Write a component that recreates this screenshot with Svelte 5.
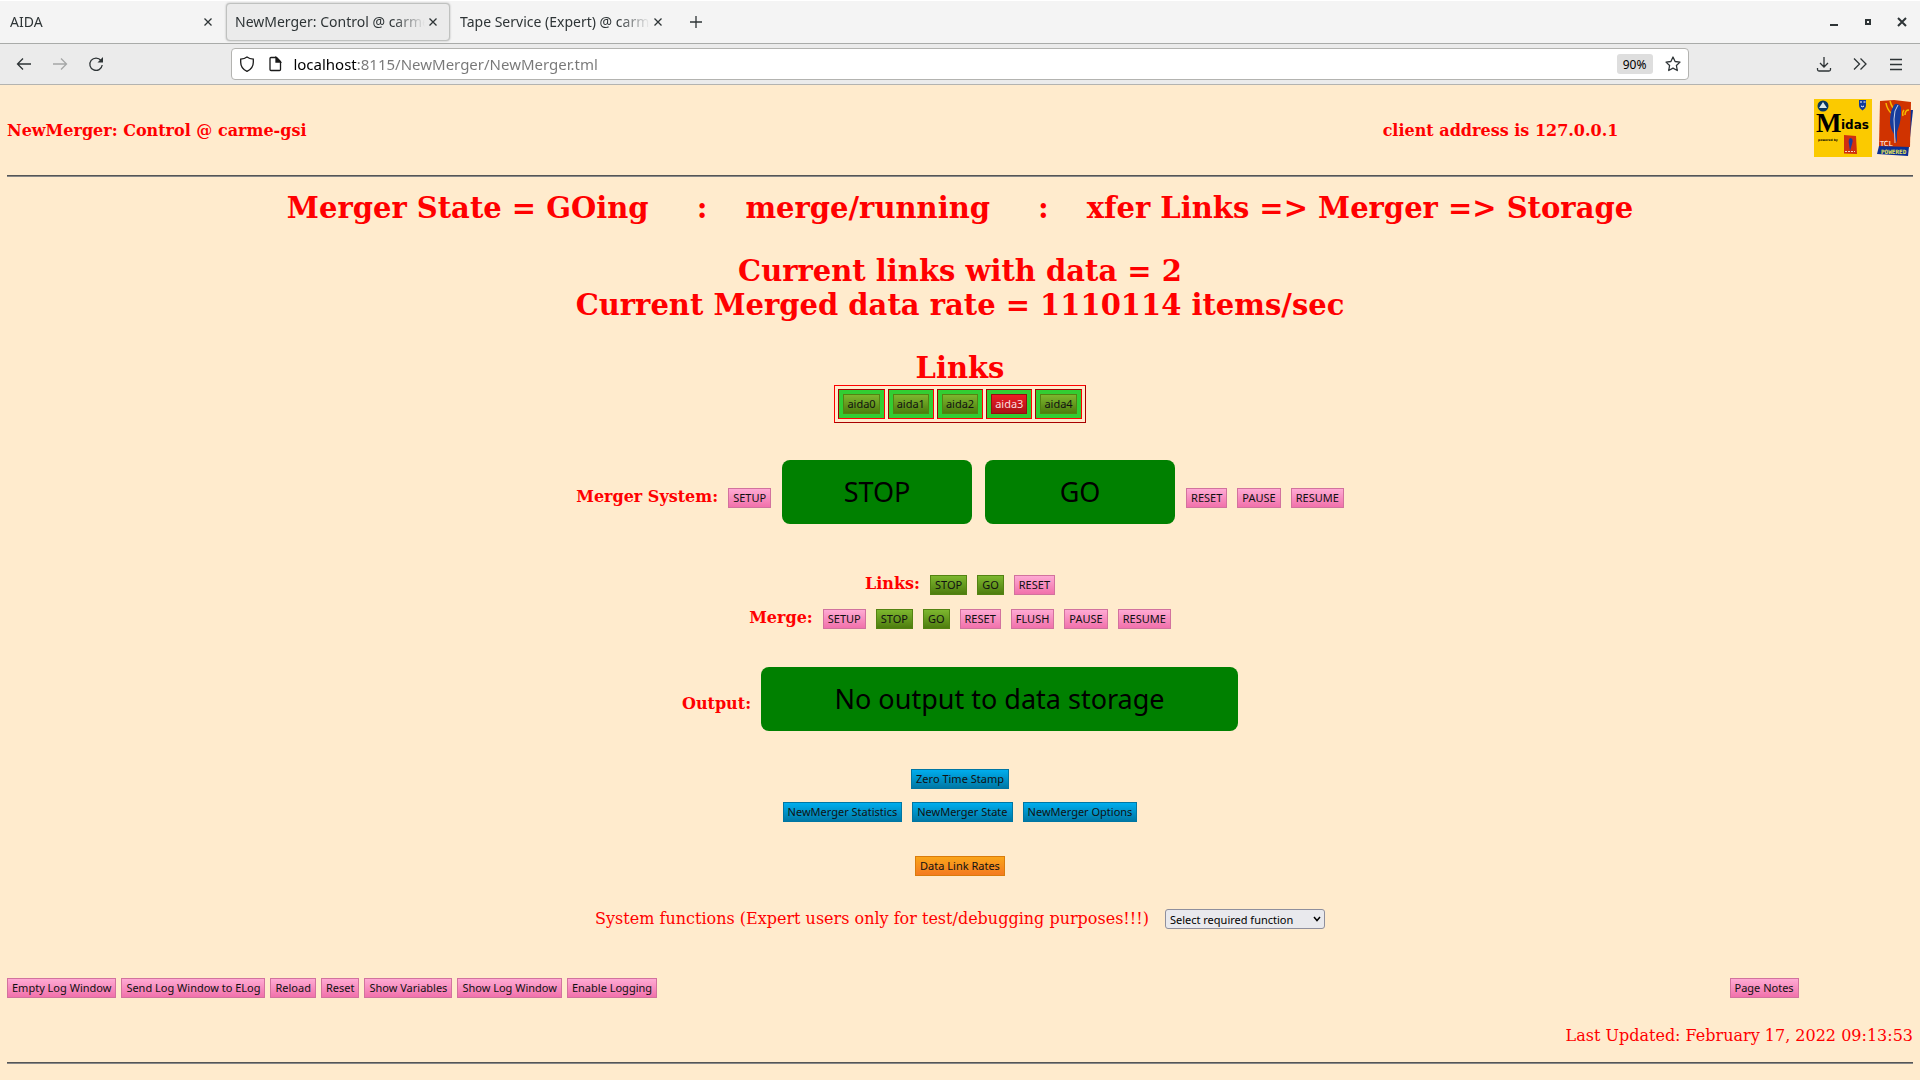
<script>
const tabs = [
    { title: "AIDA" },
    { title: "NewMerger: Control @ carme-gsi", active: true },
    { title: "Tape Service (Expert) @ carme-gsi" },
];

const links = [
    { name: "aida0", colour: "green" },
    { name: "aida1", colour: "green" },
    { name: "aida2", colour: "green" },
    { name: "aida3", colour: "red" },
    { name: "aida4", colour: "green" },
];

const linkActions = [
    { name: "STOP", colour: "green" },
    { name: "GO", colour: "green" },
    { name: "RESET", colour: "pink" },
];

const mergeActions = [
    { name: "SETUP", colour: "pink" },
    { name: "STOP", colour: "green" },
    { name: "GO", colour: "green" },
    { name: "RESET", colour: "pink" },
    { name: "FLUSH", colour: "pink" },
    { name: "PAUSE", colour: "pink" },
    { name: "RESUME", colour: "pink" },
];

const logActions = [
    "Empty Log Window",
    "Send Log Window to ELog",
    "Reload",
    "Reset",
    "Show Variables",
    "Show Log Window",
    "Enable Logging",
];

let url = "localhost:8115/NewMerger/NewMerger.tml";
</script>

<div class="browser">
    <div class="tabbar">
        {#each tabs as tab}
            <div class="tab" class:active={tab.active}>
                <button class="title">{tab.title}</button>
                <button class="icon close" aria-label="Close tab">
                    <svg width="8" height="8" viewBox="0 0 8 8"><path d="M.5.5l7 7M7.5.5l-7 7" /></svg>
                </button>
            </div>
        {/each}
        <button class="icon plus" aria-label="New tab">
            <svg width="12" height="12" viewBox="0 0 12 12"><path d="M6 0v12M0 6h12" /></svg>
        </button>
        <div class="window">
            <button class="icon" aria-label="Minimise">
                <svg width="10" height="10" viewBox="0 0 10 10"><path d="M1 8h8" stroke-width="2" /></svg>
            </button>
            <button class="icon" aria-label="Restore">
                <svg width="10" height="10" viewBox="0 0 10 10"><path d="M3 3h4v4h-4z" stroke-width="2" /></svg>
            </button>
            <button class="icon" aria-label="Close window">
                <svg width="10" height="10" viewBox="0 0 10 10"><path d="M1 1l8 8M9 1l-8 8" stroke-width="2" /></svg>
            </button>
        </div>
    </div>

    <div class="toolbar">
        <div class="nav">
            <button class="icon" aria-label="Back">
                <svg width="16" height="16" viewBox="0 0 16 16"><path d="M15 8H1.500M7 2.500L1.500 8l5.500 5.500" /></svg>
            </button>
            <button class="icon faded" aria-label="Forward">
                <svg width="16" height="16" viewBox="0 0 16 16"><path d="M1 8h13.500M9 2.500L14.500 8 9 13.500" /></svg>
            </button>
            <button class="icon" aria-label="Reload page">
                <svg width="16" height="16" viewBox="0 0 16 16">
                    <path d="M13 4.500A6.200 6.200 0 1 0 14.200 9" />
                    <path d="M15 1v5.500H9.500z" fill="currentColor" stroke="none" />
                </svg>
            </button>
        </div>
        <div class="urlbar">
            <svg width="16" height="16" viewBox="0 0 16 16"><path d="M8 1C6 2.500 4 3 1.700 3.200v3C1.700 10.500 4 13.500 8 15.300c4-1.800 6.300-4.800 6.300-9.100v-3C12 3 10 2.500 8 1z" /></svg>
            <svg width="16" height="16" viewBox="0 0 16 16">
                <path d="M4 1.500h5.500L13.500 5.500v8a1 1 0 0 1-1 1H4a1 1 0 0 1-1-1v-11a1 1 0 0 1 1-1z" />
                <path d="M9 1.500v4.500h4.500z" fill="currentColor" />
            </svg>
            <input class="url" type="text" aria-label="Address" bind:value={url} />
            <button class="zoom">90%</button>
            <button class="icon" aria-label="Bookmark this page">
                <svg width="16" height="16" viewBox="0 0 16 16"><path d="M8 1l2.100 4.500 4.900.6-3.600 3.400.9 5L8 12.100l-4.300 2.400.9-5L1 6.100l4.900-.6z" stroke-linejoin="round" /></svg>
            </button>
        </div>
        <div class="menu">
            <button class="icon" aria-label="Downloads">
                <svg width="16" height="16" viewBox="0 0 16 16"><path d="M8 1v9.500M4 7l4 4 4-4M1.500 12v1.500a1.500 1.500 0 0 0 1.500 1.500h10a1.500 1.500 0 0 0 1.500-1.500V12" /></svg>
            </button>
            <button class="icon" aria-label="More tools">
                <svg width="16" height="16" viewBox="0 0 16 16"><path d="M2 2.500L7.500 8 2 13.500M8.500 2.500L14 8l-5.500 5.500" /></svg>
            </button>
            <button class="icon" aria-label="Menu">
                <svg width="14" height="14" viewBox="0 0 14 14"><path d="M1 2.500h12M1 7.500h12M1 12.500h12" /></svg>
            </button>
        </div>
    </div>
</div>

<main>
    <header>
        <h3>NewMerger: Control @ carme-gsi</h3>
        <h3 class="client">client address is 127.0.0.1</h3>
        <a href="#midas" aria-label="Midas">
            <svg width="58" height="58" viewBox="0 0 58 58">
                <rect width="58" height="58" fill="#fbca00" />
                <circle cx="9" cy="7" r="5.500" fill="#073763" />
                <path d="M5 9l2-3 2-3 2 3 2 3z" fill="#dce8e8" />
                <path d="M45 1h7v5c0 2.500-1.500 4-3.500 5.500C46.500 10 45 8.500 45 6z" fill="#123a9a" />
                <path d="M46 3h2M49.500 3h2M47 7q1.500 1.500 3 0" stroke="#fff" fill="none" />
                <text x="2" y="33" font-family="Liberation Serif" font-size="27" font-weight="bold">M</text>
                <text x="27" y="30" font-family="DejaVu Sans" font-size="12" font-weight="bold">idas</text>
                <text x="4" y="42" font-family="DejaVu Sans" font-size="3" font-weight="bold">powered by</text>
                <path d="M30 36l12 1 1 18-13-.5z" fill="#cf2f10" />
                <path d="M36 39q4 0 2 6l-2 7-1-7q-1-4 1-6z" fill="#1a3ca0" />
                <path d="M31 52.500h10" stroke="#f3d6c0" stroke-dasharray="2 1" />
            </svg>
        </a>
        <a href="#tcl" aria-label="Tcl powered">
            <svg width="36" height="58" viewBox="0 0 36 58">
                <path d="M31 11l5 0-5 46L0 55l4-16z" fill="#0b2f93" />
                <path d="M3 2l14-1 17 2-1 45-31-1z" fill="#d03300" />
                <path d="M9 4q1 6 5 10M13 2q1 4 3 7M32 11q-4 0-4 5M27 11q-2 2-1 6" stroke="#f5b800" stroke-width="1.500" fill="none" />
                <path d="M20 5q5 1 4 7 0 9-2 15l-2 6 0 11-3-9q-4-6-4-12 0-10 3-15 2-4 4-3z" fill="#173c9c" />
                <path d="M21 6q-4 5-4 14l1 24" stroke="#c4cfe8" fill="none" />
                <text x="3" y="47" font-family="DejaVu Sans" font-size="7" fill="#fff">TCL</text>
                <text x="4" y="55" font-family="DejaVu Sans Mono" font-size="6" font-weight="bold" fill="#e6e65a">POWERED</text>
            </svg>
        </a>
    </header>
    <hr />

    <h1 class="state">
        <span>Merger State = GOing</span>
        <span>:</span>
        <span>merge/running</span>
        <span>:</span>
        <span>xfer Links =&gt; Merger =&gt; Storage</span>
    </h1>
    <h1>Current links with data = 2<br />Current Merged data rate = 1110114 items/sec</h1>
    <h1>Links</h1>

    <table class="links">
        <tbody>
            <tr>
                {#each links as link}
                    <td><button class="btn {link.colour}">{link.name}</button></td>
                {/each}
            </tr>
        </tbody>
    </table>

    <div class="row system">
        <span class="label">Merger System:</span>
        <button class="btn pink">SETUP</button>
        <div class="pair">
            <button class="big">STOP</button>
            <button class="big">GO</button>
        </div>
        <button class="btn pink">RESET</button>
        <button class="btn pink">PAUSE</button>
        <button class="btn pink">RESUME</button>
    </div>

    <div class="row far">
        <span class="label">Links:</span>
        {#each linkActions as action}
            <button class="btn {action.colour}">{action.name}</button>
        {/each}
    </div>
    <div class="row near">
        <span class="label">Merge:</span>
        {#each mergeActions as action}
            <button class="btn {action.colour}">{action.name}</button>
        {/each}
    </div>

    <div class="row output">
        <span class="label">Output:</span>
        <button class="big wide">No output to data storage</button>
    </div>

    <div class="row output">
        <button class="btn blue">Zero Time Stamp</button>
    </div>
    <div class="row pages">
        <button class="btn blue">NewMerger Statistics</button>
        <button class="btn blue">NewMerger State</button>
        <button class="btn blue">NewMerger Options</button>
    </div>

    <div class="row rates">
        <button class="btn orange">Data Link Rates</button>
    </div>

    <div class="row functions">
        <label for="function">System functions (Expert users only for test/debugging purposes!!!)</label>
        <div class="select">
            <select id="function">
                <option>Select required function</option>
            </select>
            <svg width="8" height="6" viewBox="0 0 8 6"><path d="M1 1l3 3.500L7 1" stroke="#000" stroke-width="1.500" fill="none" /></svg>
        </div>
    </div>

    <div class="log">
        {#each logActions as action}
            <button class="btn pink">{action}</button>
        {/each}
        <button class="btn pink notes">Page Notes</button>
    </div>

    <p class="updated">Last Updated: February 17, 2022 09:13:53</p>
    <hr />
</main>

<style>
:global(body) {
    background-color: #ffebcd;
}

button, input, select {
    margin: 0;
    padding: 0;
    border: 0;
    background: none;
    font-family: "Noto Sans", sans-serif;
}

.browser {
    color: #2e3436;
    font-family: "Noto Sans", sans-serif;
}

.browser svg {
    display: block;
    flex: none;
    fill: none;
    stroke: currentColor;
    stroke-width: 1.3;
}

.icon {
    display: flex;
    align-items: center;
    justify-content: center;
    width: 24px;
    height: 24px;
    color: #2e3436;
}

.tabbar {
    display: flex;
    align-items: center;
    gap: 1px;
    box-sizing: border-box;
    height: 44px;
    padding-left: 1px;
    border-top: 1px solid #fff;
    border-bottom: 1px solid #a9aba9;
    background-color: #f4f4f4;
}

.tab {
    display: flex;
    align-items: center;
    box-sizing: border-box;
    width: 224px;
    height: 38px;
    padding: 0 8px;
    border: 1px solid transparent;
    border-radius: 4px;
}

.tab.active {
    border-color: #bfc1bf;
    background-color: #ebebeb;
    box-shadow: 0 0 2px #aaa;
}

.title {
    flex: 1;
    min-width: 0;
    overflow: hidden;
    color: #2e3436;
    font-size: 14px;
    line-height: 24px;
    text-align: left;
    white-space: nowrap;
    mask-image: linear-gradient(to left, transparent, #000 32px);
}

.close {
    width: 16px;
}

.plus {
    margin-left: 8px;
}

.window {
    display: flex;
    gap: 10px;
    margin-left: auto;
    padding-right: 6px;
}

.toolbar {
    display: flex;
    align-items: center;
    box-sizing: border-box;
    height: 41px;
    border-bottom: 1px solid #b3b3b0;
    background-color: #ebebeb;
}

.nav {
    display: flex;
    gap: 12px;
    width: 12%;
    box-sizing: border-box;
    padding-left: 12px;
}

.faded {
    color: #a5a7a7;
}

.urlbar {
    display: flex;
    flex: 1;
    align-items: center;
    gap: 12px;
    box-sizing: border-box;
    height: 32px;
    margin: 0 1px;
    padding: 0 3px 0 7px;
    border: 1px solid #b3b3b0;
    border-radius: 4px;
    background-color: #fff;
    color: #1a1a1a;
}

.url {
    flex: 1;
    min-width: 0;
    height: 24px;
    margin-left: -2px;
    background-image: linear-gradient(to right, #000 65px, #777 65px);
    background-clip: text;
    color: transparent;
    font-size: 15px;
}

.zoom {
    width: 36px;
    height: 20px;
    margin-right: -4px;
    border-radius: 3px;
    background-color: #dedede;
    font-size: 12px;
}

.menu {
    display: flex;
    justify-content: flex-end;
    gap: 12px;
    width: 12%;
    box-sizing: border-box;
    padding-right: 12px;
}

main {
    padding: 14px 7px;
    color: #f00;
    font-family: "DejaVu Serif", serif;
    font-size: 16px;
}

header {
    display: flex;
    align-items: center;
    gap: 5px;
    margin-bottom: 18px;
}

header svg {
    display: block;
}

h3 {
    margin: 4px 0 0;
    font-size: 16px;
}

.client {
    margin-left: auto;
    margin-right: 10%;
}

hr {
    margin: 0;
    border: 0;
    border-top: 1px solid #555;
    border-bottom: 1px solid #888;
}

h1 {
    margin: 29px 0 0;
    font-size: 29px;
    line-height: 34px;
    text-align: center;
}

.state {
    display: flex;
    justify-content: center;
    margin-top: 14px;
}

.state span:nth-child(even) {
    margin: 0 38px 0 48px;
}

.links {
    margin: 0 auto;
    border: 1px solid;
    border-color: #f00 #a80000 #a80000 #f00;
    border-spacing: 3px;
}

.links td {
    padding: 4px;
    border: 1px solid;
    border-color: #a80000 #f00 #f00 #a80000;
    background-color: #32cd32;
}

.btn {
    display: block;
    box-sizing: border-box;
    height: 20px;
    padding: 0 4px;
    border: 1px solid;
    color: #111;
    font-size: 11px;
    line-height: 18px;
    white-space: nowrap;
}

.links .btn {
    padding: 0 3px;
}

.pink {
    border-color: #d2729e;
    background-image: linear-gradient(#feaad3, #f171ab);
}

.green {
    border-color: #538312;
    background-image: linear-gradient(#7db72f, #4e7d0e);
}

.red {
    border-color: #980c10;
    background-image: linear-gradient(#ed1c24, #aa1317);
    color: #faddde;
}

.blue {
    border-color: #0076a3;
    background-image: linear-gradient(#00adee, #0078a5);
}

.orange {
    border-color: #da7c0c;
    background-image: linear-gradient(#faa51a, #f47a20);
}

.row {
    display: flex;
    align-items: baseline;
    justify-content: center;
    gap: 10px;
}

.label {
    font-weight: bold;
    line-height: 16px;
}

.system {
    margin-top: 37px;
}

.pair {
    display: flex;
    gap: 13px;
    margin: 0 1px;
}

.big {
    width: 190px;
    height: 64px;
    padding-bottom: 2px;
    border-radius: 8px;
    background-color: #008000;
    color: #000;
    font-size: 27px;
}

.wide {
    width: 477px;
}

.far {
    margin-top: 51px;
}

.near {
    margin-top: 14px;
}

.pages {
    margin-top: 13px;
}

.output {
    margin-top: 38px;
}

.rates {
    margin-top: 34px;
}

.functions {
    gap: 16px;
    margin-top: 33px;
}

.functions label {
    line-height: 16px;
}

.select {
    display: grid;
    align-items: center;
}

.select select, .select svg {
    grid-area: 1 / 1;
}

.select select {
    box-sizing: border-box;
    width: 160px;
    height: 20px;
    padding: 0 4px;
    border: 1px solid #8f8f9d;
    border-radius: 3px;
    background-color: #e9e9ed;
    appearance: none;
    font-size: 11px;
}

.select svg {
    justify-self: end;
    margin-right: 4px;
    pointer-events: none;
}

.log {
    display: flex;
    gap: 5px;
    margin-top: 49px;
}

.notes {
    margin-left: auto;
    margin-right: 6%;
}

.updated {
    margin: 28px 0 16px;
    line-height: 20px;
    text-align: right;
}
</style>
